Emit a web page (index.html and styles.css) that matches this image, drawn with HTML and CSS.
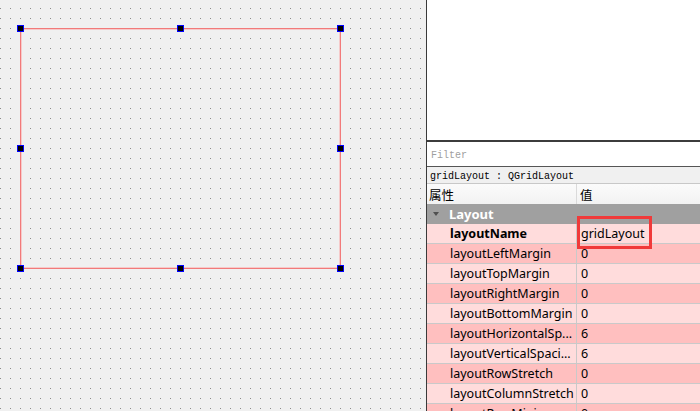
FILE: index.html
```html
<!DOCTYPE html>
<html>
<head>
<meta charset="utf-8">
<link rel="stylesheet" href="styles.css">
</head>
<body>
<div class="app">
  <div class="canvas">
    <div class="layout-box">
      <span class="handle h-tl"></span>
      <span class="handle h-tc"></span>
      <span class="handle h-tr"></span>
      <span class="handle h-ml"></span>
      <span class="handle h-mr"></span>
      <span class="handle h-bl"></span>
      <span class="handle h-bc"></span>
      <span class="handle h-br"></span>
    </div>
  </div>
  <div class="panel">
    <div class="object-area"></div>
    <div class="filter">Filter</div>
    <div class="classline">gridLayout : QGridLayout</div>
    <div class="header">
      <div class="hcell">属性</div>
      <div class="hcell hval">值</div>
    </div>
    <div class="group"><span class="tri"></span><span class="gname">Layout</span></div>
    <div class="rows">
      <div class="row light"><div class="name bold">layoutName</div><div class="val">gridLayout</div></div>
      <div class="row dark"><div class="name">layoutLeftMargin</div><div class="val">0</div></div>
      <div class="row light"><div class="name">layoutTopMargin</div><div class="val">0</div></div>
      <div class="row dark"><div class="name">layoutRightMargin</div><div class="val">0</div></div>
      <div class="row light"><div class="name">layoutBottomMargin</div><div class="val">0</div></div>
      <div class="row dark"><div class="name">layoutHorizontalSp...</div><div class="val">6</div></div>
      <div class="row light"><div class="name">layoutVerticalSpaci...</div><div class="val">6</div></div>
      <div class="row dark"><div class="name">layoutRowStretch</div><div class="val">0</div></div>
      <div class="row light"><div class="name">layoutColumnStretch</div><div class="val">0</div></div>
      <div class="row dark"><div class="name">layoutRowMini...</div><div class="val">0</div></div>
    </div>
    <div class="highlight"></div>
  </div>
</div>
</body>
</html>
```

FILE: styles.css
```css
* { box-sizing: border-box; }
html, body { margin: 0; padding: 0; }
body { width: 700px; height: 411px; overflow: hidden; background: #f0f0f0; }

.app { display: flex; width: 700px; height: 411px; }

.canvas {
  position: relative;
  width: 426px;
  height: 411px;
  flex: none;
  background-color: #f0f0f0;
  background-image:
    linear-gradient(to right, #f0f0f0 9px, transparent 9px),
    linear-gradient(to bottom, #f0f0f0 9px, #8c8c8c 9px);
  background-size: 10px 10px, 10px 10px;
  background-position: 1px -1px, 1px -1px;
}

.layout-box {
  position: absolute;
  left: 20px;
  top: 28px;
  width: 321px;
  height: 241px;
  border: 1px solid #f27a7a;
  box-shadow: inset 0 0 0 1px #f6caca;
}

.handle {
  position: absolute;
  width: 7px;
  height: 7px;
  background: #000;
  border: 1px solid #0000ff;
}
.h-tl { left: -4px; top: -4px; }
.h-tc { left: 156px; top: -4px; }
.h-tr { left: 316px; top: -4px; }
.h-ml { left: -4px; top: 116px; }
.h-mr { left: 316px; top: 116px; }
.h-bl { left: -4px; top: 236px; }
.h-bc { left: 156px; top: 236px; }
.h-br { left: 316px; top: 236px; }

.panel {
  position: relative;
  flex: 1;
  height: 411px;
  border-left: 1px solid #3a3a3a;
  display: flex;
  flex-direction: column;
  background: #ffffff;
  font-family: "Noto Sans", "Noto Sans CJK SC", sans-serif;
  font-size: 12.5px;
  color: #000;
}

.object-area {
  height: 142px;
  flex: none;
  background: #fff;
  border-bottom: 2px solid #3c3c3c;
}

.filter {
  height: 25px;
  flex: none;
  background: #fff;
  border-bottom: 1px solid #555;
  font-family: "Liberation Mono", monospace;
  font-size: 10px;
  color: #a0a0a0;
  padding: 2px 0 0 4px;
  display: flex;
  align-items: center;
}

.classline {
  height: 17px;
  flex: none;
  background: #f0f0f0;
  border-bottom: 1px solid #c8c8c8;
  font-family: "Liberation Mono", monospace;
  font-size: 10px;
  color: #000;
  padding: 2px 0 0 3px;
  display: flex;
  align-items: center;
}

.header {
  height: 20px;
  flex: none;
  display: flex;
  background: linear-gradient(to bottom, #fbfbfb, #f2f2f2);
  font-family: "Noto Sans CJK SC", sans-serif;
  font-size: 12.5px;
}
.hcell {
  width: 150px;
  padding-left: 2px;
  display: flex;
  align-items: center;
  border-right: 1px solid #dadada;
}
.hcell.hval { flex: 1; width: auto; border-right: none; padding-left: 3px; }

.group {
  height: 20px;
  flex: none;
  background: #a0a0a0;
  display: flex;
  align-items: center;
  color: #fff;
  font-weight: bold;
  font-size: 13px;
}
.tri {
  width: 0;
  height: 0;
  margin-left: 6px;
  border-left: 3.5px solid transparent;
  border-right: 3.5px solid transparent;
  border-top: 4px solid #505050;
}
.gname { margin-left: 10px; }

.rows { flex: 1; overflow: hidden; }
.row {
  height: 20px;
  display: flex;
  border-bottom: 1px solid #c9c9c9;
}
.row.light { background: #ffdcdc; }
.row.dark { background: #ffbfbf; }
.name {
  width: 150px;
  flex: none;
  padding-left: 23px;
  border-right: 1px solid #c9c9c9;
  display: flex;
  align-items: center;
  white-space: nowrap;
  overflow: hidden;
}
.name.bold { font-weight: bold; }
.val {
  flex: 1;
  padding-left: 4px;
  display: flex;
  align-items: center;
}

.highlight {
  position: absolute;
  left: 150px;
  top: 216px;
  width: 75px;
  height: 33px;
  border: 3px solid #f03a3a;
}
```
